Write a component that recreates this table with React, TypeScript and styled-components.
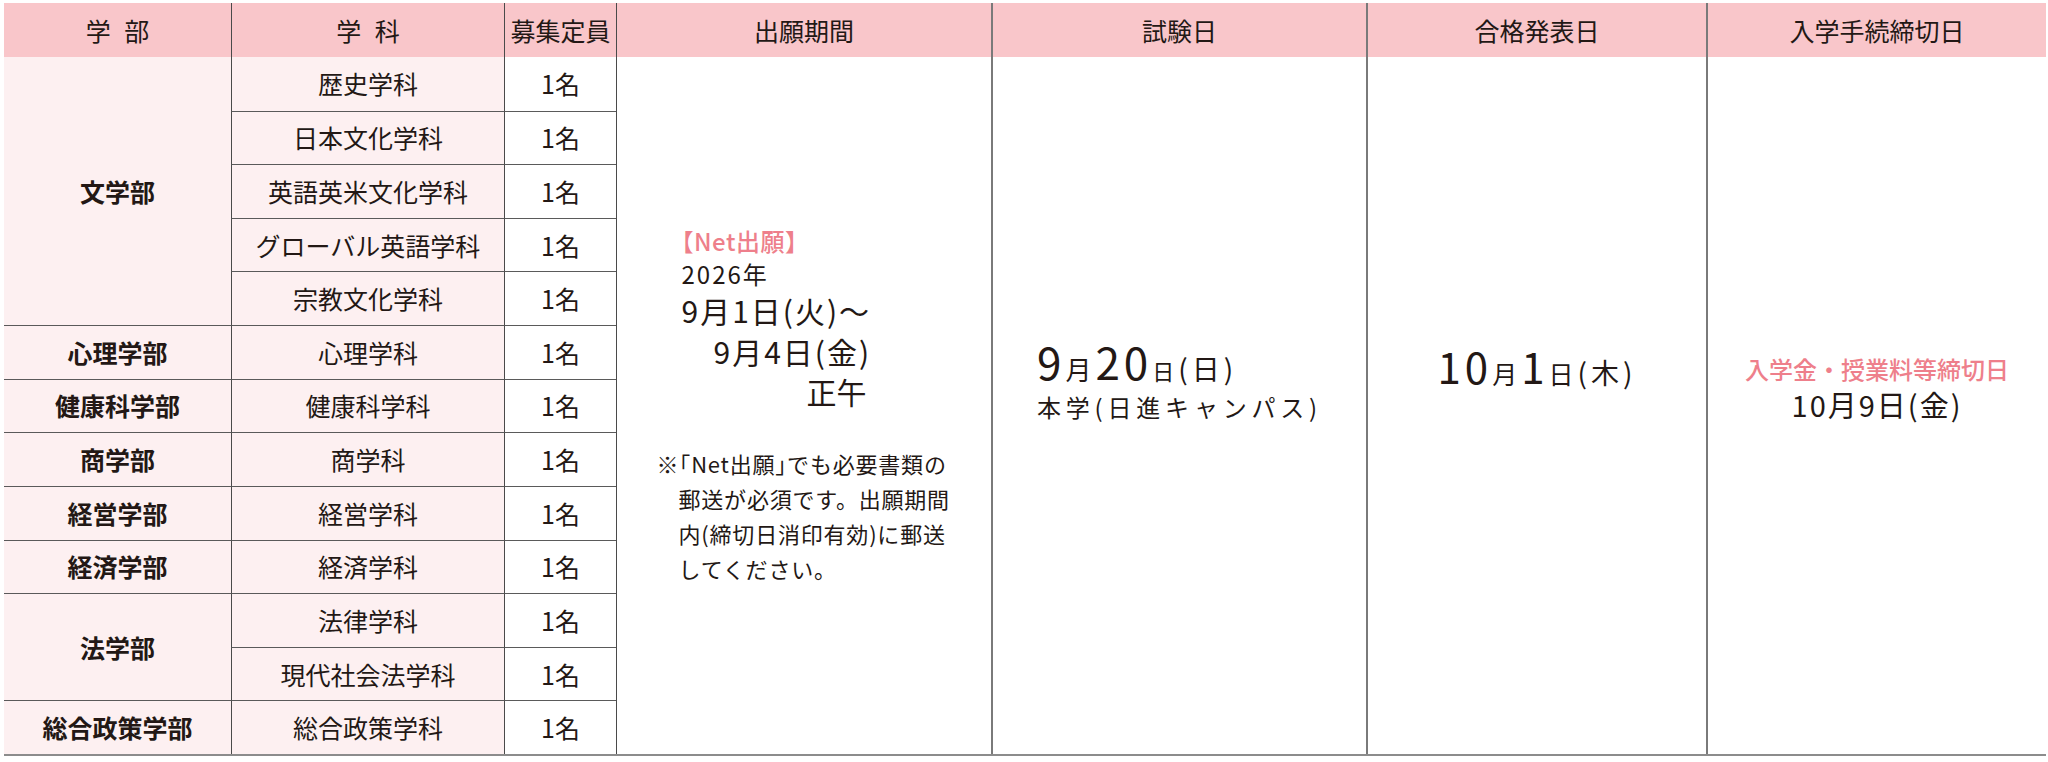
import React from 'react';
import styled, { createGlobalStyle } from 'styled-components';

const GlobalStyle = createGlobalStyle`
  html, body {
    margin: 0;
    padding: 0;
    background: #fff;
  }
  body {
    font-family: "Noto Sans CJK JP", "Noto Sans", sans-serif;
    color: #231815;
  }
`;

const Page = styled.div`
  width: 2048px;
  padding: 3px 2px 0 4px;
  box-sizing: border-box;
`;

const Table = styled.div`
  display: grid;
  grid-template-columns: 227px 273px 112px 375px 375px 340px 1fr;
  grid-template-rows: 54px repeat(13, 1fr);
  height: 753px;
  box-sizing: border-box;
  border-bottom: 2px solid #8c8c8c;
`;

const HeadCell = styled.div<{ $first?: boolean; $soft?: boolean }>`
  display: flex;
  align-items: center;
  justify-content: center;
  background: #f9c6ca;
  font-size: 25px;
  line-height: 1;
  white-space: pre;
  word-spacing: 8px;
  border-left: ${(p) => (p.$first ? 'none' : p.$soft ? '2px solid #7a7a7a' : '1.5px solid #4a4a4a')};
`;

const BodyCell = styled.div<{
  $col: number;
  $row: number;
  $span?: number;
  $tint?: boolean;
  $bold?: boolean;
  $top?: boolean;
  $left?: boolean;
}>`
  grid-column: ${(p) => p.$col};
  grid-row: ${(p) => `${p.$row} / span ${p.$span ?? 1}`};
  display: flex;
  align-items: center;
  justify-content: center;
  background: ${(p) => (p.$tint ? '#fdf0f1' : '#fff')};
  font-size: 25px;
  font-weight: ${(p) => (p.$bold ? 700 : 400)};
  line-height: 1;
  border-top: ${(p) => (p.$top ? '1.5px solid #5a5a5a' : 'none')};
  border-left: ${(p) => (p.$left ? '1.5px solid #4a4a4a' : 'none')};
`;

const DateCell = styled.div<{ $col: number; $dark?: boolean; $lift?: number }>`
  grid-column: ${(p) => p.$col};
  grid-row: 2 / span 13;
  display: flex;
  align-items: center;
  justify-content: center;
  padding-bottom: ${(p) => p.$lift ?? 0}px;
  border-left: ${(p) => (p.$dark ? '1.5px solid #4a4a4a' : '2px solid #7a7a7a')};
`;

const Block = styled.div`
  display: flex;
  flex-direction: column;
  align-items: flex-start;
`;

const CenterBlock = styled.div`
  display: flex;
  flex-direction: column;
  align-items: center;
`;

const Line = styled.div<{ $size: number; $indent?: number; $pink?: boolean; $spacing?: number }>`
  font-size: ${(p) => p.$size}px;
  font-weight: ${(p) => (p.$pink ? 500 : 400)};
  line-height: 1.35;
  margin-left: ${(p) => p.$indent ?? 0}px;
  letter-spacing: ${(p) => p.$spacing ?? 0}px;
  color: ${(p) => (p.$pink ? '#ee7f8b' : '#231815')};
  white-space: nowrap;
`;

const Num = styled.span<{ $size: number }>`
  font-size: ${(p) => p.$size}px;
`;

const Half = styled.span`
  font-feature-settings: "halt";
`;

const Note = styled.p`
  margin: 34px 0 0;
  width: 273px;
  padding-left: 22px;
  text-indent: -22px;
  font-size: 22px;
  line-height: 35px;
  letter-spacing: 0.8px;
  white-space: nowrap;
  color: #231815;
`;

type Faculty = { name: string; depts: string[] };

const faculties: Faculty[] = [
  { name: '文学部', depts: ['歴史学科', '日本文化学科', '英語英米文化学科', 'グローバル英語学科', '宗教文化学科'] },
  { name: '心理学部', depts: ['心理学科'] },
  { name: '健康科学部', depts: ['健康科学科'] },
  { name: '商学部', depts: ['商学科'] },
  { name: '経営学部', depts: ['経営学科'] },
  { name: '経済学部', depts: ['経済学科'] },
  { name: '法学部', depts: ['法律学科', '現代社会法学科'] },
  { name: '総合政策学部', depts: ['総合政策学科'] },
];

const headers = ['学 部', '学 科', '募集定員', '出願期間', '試験日', '合格発表日', '入学手続締切日'];

const App: React.FC = () => {
  let row = 2;
  const cells: React.ReactNode[] = [];
  faculties.forEach((f) => {
    const start = row;
    cells.push(
      <BodyCell key={f.name} $col={1} $row={start} $span={f.depts.length} $tint $bold $top={start > 2}>
        {f.name}
      </BodyCell>
    );
    f.depts.forEach((d) => {
      cells.push(
        <BodyCell key={d} $col={2} $row={row} $tint $left $top={row > 2}>
          {d}
        </BodyCell>
      );
      cells.push(
        <BodyCell key={d + '-n'} $col={3} $row={row} $left $top={row > 2}>
          1名
        </BodyCell>
      );
      row += 1;
    });
  });

  return (
    <>
      <GlobalStyle />
      <Page>
        <Table>
          {headers.map((h, i) => (
            <HeadCell key={h} $first={i === 0} $soft={i >= 4}>
              {h}
            </HeadCell>
          ))}
          {cells}

          <DateCell $col={4} $dark>
            <Block>
              <Line $size={24} $indent={13} $pink $spacing={0.5}>
                【Net出願】
              </Line>
              <Line $size={24} $indent={25} $spacing={2}>
                2026年
              </Line>
              <Line $size={30} $indent={25} $spacing={2}>
                9月1日(火)〜
              </Line>
              <Line $size={30} $indent={57} $spacing={2}>
                9月4日(金)
              </Line>
              <Line $size={30} $indent={150}>
                正午
              </Line>
              <Note>
                ※<Half>「</Half>Net出願<Half>」</Half>でも必要書類の
                <br />
                郵送が必須です。出願期間
                <br />
                内(締切日消印有効)に郵送
                <br />
                してください。
              </Note>
            </Block>
          </DateCell>

          <DateCell $col={5} $lift={56}>
            <Block>
              <Line $size={28} $spacing={4}>
                <Num $size={44}>9</Num>
                <Num $size={26}>月</Num>
                <Num $size={44}>20</Num>
                <Num $size={22}>日</Num>(日)
              </Line>
              <Line $size={24} $spacing={4.8}>
                本学(日進キャンパス)
              </Line>
            </Block>
          </DateCell>

          <DateCell $col={6} $lift={78}>
            <Line $size={28} $spacing={4}>
              <Num $size={42}>10</Num>
              <Num $size={25}>月</Num>
              <Num $size={42}>1</Num>
              <Num $size={25}>日</Num>(木)
            </Line>
          </DateCell>

          <DateCell $col={7} $lift={34}>
            <CenterBlock>
              <Line $size={24} $pink>
                入学金・授業料等締切日
              </Line>
              <Line $size={29} $spacing={2}>
                10月9日(金)
              </Line>
            </CenterBlock>
          </DateCell>
        </Table>
      </Page>
    </>
  );
};

export default App;
